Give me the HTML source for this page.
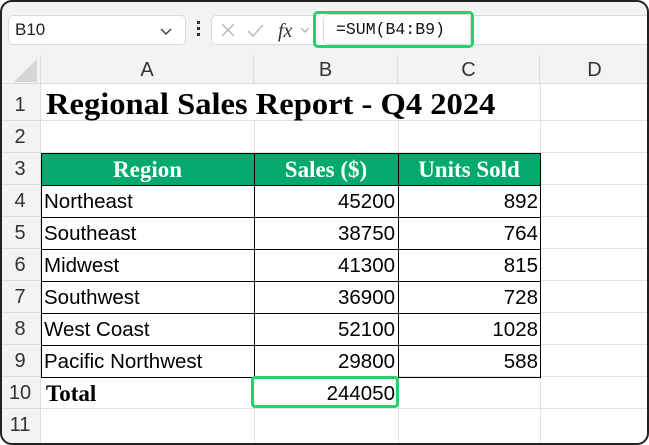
<!DOCTYPE html>
<html><head><style>
*{margin:0;padding:0;box-sizing:border-box}
body{width:649px;height:445px;overflow:hidden;background:#fff;font-family:"Liberation Sans",sans-serif;position:relative}
.frame{position:absolute;left:0;top:0;width:649px;height:445px;background:#f3f3f3;overflow:hidden;border-radius:12px}
.border{position:absolute;left:0;top:0;width:649px;height:445px;border:2px solid #222;border-radius:12px;pointer-events:none}
.abs{position:absolute}
.nb{left:8px;top:15px;width:178px;height:30px;background:#fff;border:1px solid #dadada;border-radius:5px;font-size:17px;line-height:28px;padding-left:6px;color:#222}
.fx{left:211px;top:15px;width:110px;height:30px;background:#fff;border:1px solid #dadada;border-radius:5px}
.fb{left:313px;top:11px;width:161px;height:37px;border:3px solid #22d36b;border-radius:5px;background:#fff}
.fbtxt{left:336px;top:15px;font-family:"Liberation Mono",monospace;font-size:16.5px;line-height:30px;color:#111}
.rest{left:474px;top:15px;width:175px;height:30px;background:#fff;border-top:1px solid #dadada;border-bottom:1px solid #dadada}
.grid{left:0;top:55px;width:649px;height:390px;background:#fff}
.ch{top:55px;height:29px;background:#f3f3f3;border-right:1px solid #dcdcdc;border-bottom:1px solid #dcdcdc;text-align:center;font-size:20px;line-height:30px;color:#333}
.rh{left:0;width:41px;background:#f3f3f3;border-right:1px solid #dcdcdc;border-bottom:1px solid #dcdcdc;text-align:center;font-size:20px;color:#333}
.hl{height:1px;background:#e1e1e1;left:41px;width:608px}
.vl{width:1px;background:#e1e1e1;top:84px;height:361px}
.c{font-size:20.5px;line-height:32px;color:#000;white-space:nowrap}
.serif{font-family:"Liberation Serif",serif;font-weight:bold}
</style></head><body>
<div class="frame">
<div class="abs nb">B10<svg width="14" height="10" style="position:absolute;right:12px;top:11px"><path d="M2 2 L7 7 L12 2" stroke="#444" stroke-width="1.5" fill="none"/></svg></div>
<div class="abs" style="left:197px;top:21px;width:3px;height:3px;background:#333;box-shadow:0 6px #333,0 12px #333"></div>
<div class="abs fx">
<svg width="110" height="30" style="position:absolute;left:0;top:0">
<path d="M10 8 L22 20 M22 8 L10 20" stroke="#b8b8b8" stroke-width="1.4" fill="none"/>
<path d="M36 15 L41 20 L51 9" stroke="#b8b8b8" stroke-width="1.4" fill="none"/>
<text x="66" y="21" font-family="Liberation Serif" font-style="italic" font-size="20" fill="#333">fx</text>
<path d="M89 12 L93 16 L97 12" stroke="#aaa" stroke-width="1.2" fill="none"/>
</svg></div>
<div class="abs rest"></div>
<div class="abs fb"></div>
<div class="abs" style="left:323px;top:14px;width:148px;height:31px;border:1px solid #dadada;border-radius:5px"></div>
<div class="abs fbtxt">=SUM(B4:B9)</div>
<div class="abs grid"></div>
<div class="abs" style="left:0;top:55px;width:41px;height:29px;background:#f3f3f3;border-right:1px solid #dcdcdc;border-bottom:1px solid #dcdcdc"><svg width="41" height="29"><path d="M14 27 L37 27 L37 4 Z" fill="#d6d6d6"/></svg></div>
<div class="abs ch" style="left:41px;width:213px">A</div>
<div class="abs ch" style="left:254px;width:144px">B</div>
<div class="abs ch" style="left:398px;width:142px">C</div>
<div class="abs ch" style="left:540px;width:109px;border-right:none">D</div>
<div class="abs rh" style="top:84px;height:37px;line-height:42px">1</div>
<div class="abs rh" style="top:121px;height:32px;line-height:32px">2</div>
<div class="abs rh" style="top:153px;height:32px;line-height:32px">3</div>
<div class="abs rh" style="top:185px;height:32px;line-height:32px">4</div>
<div class="abs rh" style="top:217px;height:32px;line-height:32px">5</div>
<div class="abs rh" style="top:249px;height:32px;line-height:32px">6</div>
<div class="abs rh" style="top:281px;height:32px;line-height:32px">7</div>
<div class="abs rh" style="top:313px;height:32px;line-height:32px">8</div>
<div class="abs rh" style="top:345px;height:32px;line-height:32px">9</div>
<div class="abs rh" style="top:377px;height:32px;line-height:32px">10</div>
<div class="abs rh" style="top:409px;height:36px;line-height:32px">11</div>
<div class="abs hl" style="top:120px"></div>
<div class="abs hl" style="top:152px"></div>
<div class="abs hl" style="top:408px"></div>
<div class="abs hl" style="left:540px;width:109px;top:184px"></div>
<div class="abs hl" style="left:540px;width:109px;top:216px"></div>
<div class="abs hl" style="left:540px;width:109px;top:248px"></div>
<div class="abs hl" style="left:540px;width:109px;top:280px"></div>
<div class="abs hl" style="left:540px;width:109px;top:312px"></div>
<div class="abs hl" style="left:540px;width:109px;top:344px"></div>
<div class="abs hl" style="left:398px;width:251px;top:376px"></div>
<div class="abs vl" style="left:540px"></div>
<div class="abs vl" style="left:254px;top:121px;height:32px"></div>
<div class="abs vl" style="left:398px;top:121px;height:32px"></div>
<div class="abs vl" style="left:254px;top:409px;height:36px"></div>
<div class="abs vl" style="left:398px;top:377px;height:68px"></div>
<div class="abs c serif" style="left:46px;top:86px;font-size:31px;line-height:36px;transform:scaleX(1.05);transform-origin:left">Regional Sales Report - Q4 2024</div>
<div class="abs" style="left:41px;top:153px;width:500px;height:225px;border:1px solid #000"></div>
<div class="abs" style="left:42px;top:154px;width:498px;height:31px;background:#04a96c"></div>
<div class="abs" style="left:254px;top:153px;width:1px;height:224px;background:#000"></div>
<div class="abs" style="left:398px;top:153px;width:1px;height:224px;background:#000"></div>
<div class="abs" style="left:41px;top:185px;width:500px;height:1px;background:#000"></div>
<div class="abs" style="left:41px;top:217px;width:500px;height:1px;background:#000"></div>
<div class="abs" style="left:41px;top:249px;width:500px;height:1px;background:#000"></div>
<div class="abs" style="left:41px;top:281px;width:500px;height:1px;background:#000"></div>
<div class="abs" style="left:41px;top:313px;width:500px;height:1px;background:#000"></div>
<div class="abs" style="left:41px;top:345px;width:500px;height:1px;background:#000"></div>
<div class="abs c serif" style="left:41px;width:213px;top:154px;text-align:center;color:#fff;font-size:23px;line-height:31px">Region</div>
<div class="abs c serif" style="left:254px;width:144px;top:154px;text-align:center;color:#fff;font-size:23px;line-height:31px">Sales ($)</div>
<div class="abs c serif" style="left:398px;width:142px;top:154px;text-align:center;color:#fff;font-size:23px;line-height:31px">Units Sold</div>
<div class="abs c" style="left:44px;top:186px">Northeast</div>
<div class="abs c" style="left:44px;top:218px">Southeast</div>
<div class="abs c" style="left:44px;top:250px">Midwest</div>
<div class="abs c" style="left:44px;top:282px">Southwest</div>
<div class="abs c" style="left:44px;top:314px">West Coast</div>
<div class="abs c" style="left:44px;top:346px">Pacific Northwest</div>
<div class="abs c serif" style="left:46px;top:378px;font-size:23px">Total</div>
<div class="abs c" style="left:254px;width:141px;text-align:right;top:186px">45200</div>
<div class="abs c" style="left:254px;width:141px;text-align:right;top:218px">38750</div>
<div class="abs c" style="left:254px;width:141px;text-align:right;top:250px">41300</div>
<div class="abs c" style="left:254px;width:141px;text-align:right;top:282px">36900</div>
<div class="abs c" style="left:254px;width:141px;text-align:right;top:314px">52100</div>
<div class="abs c" style="left:254px;width:141px;text-align:right;top:346px">29800</div>
<div class="abs c" style="left:254px;width:141px;text-align:right;top:378px">244050</div>
<div class="abs c" style="left:398px;width:140px;text-align:right;top:186px">892</div>
<div class="abs c" style="left:398px;width:140px;text-align:right;top:218px">764</div>
<div class="abs c" style="left:398px;width:140px;text-align:right;top:250px">815</div>
<div class="abs c" style="left:398px;width:140px;text-align:right;top:282px">728</div>
<div class="abs c" style="left:398px;width:140px;text-align:right;top:314px">1028</div>
<div class="abs c" style="left:398px;width:140px;text-align:right;top:346px">588</div>
<div class="abs" style="left:251px;top:376px;width:148px;height:32px;border:3px solid #22d36b;border-radius:4px"></div>
</div>
<div class="border"></div>
</body></html>
